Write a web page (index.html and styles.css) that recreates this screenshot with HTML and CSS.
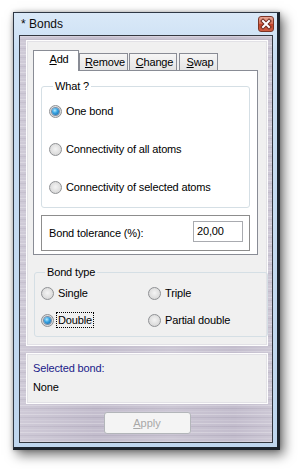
FILE: index.html
```html
<html>
    <head>
        <title> Bonds </title>
        <link rel="stylesheet" href="styles.css">
    </head>
    <body>
        <div class="window">
            <div class="titlebar">
                <span class="title">* Bonds</span>
                <span class="close">
                    <svg width="14" height="14" viewBox="0 0 14 14">
                        <path d="M4 4 L10 10 M10 4 L4 10" stroke="#6e2a1c" stroke-width="4" stroke-linecap="square"/>
                        <path d="M4 4 L10 10 M10 4 L4 10" stroke="#fff" stroke-width="2" stroke-linecap="square"/>
                    </svg>
                </span>
            </div>
            <div class="client">
                <div class="panel main">
                    <div class="tabs">
                        <div class="tab active"><u>A</u>dd</div>
                        <div class="tab remove"><u>R</u>emove</div>
                        <div class="tab change"><u>C</u>hange</div>
                        <div class="tab swap"><u>S</u>wap</div>
                    </div>
                    <div class="tabpage">
                        <fieldset class="group what">
                            <legend>What ?</legend>
                            <div class="rows">
                                <label class="radio checked"><span class="dot"></span>One bond</label>
                                <label class="radio"><span class="dot"></span>Connectivity of all atoms</label>
                                <label class="radio"><span class="dot"></span>Connectivity of selected atoms</label>
                            </div>
                        </fieldset>
                        <div class="tolerance">
                            <span>Bond tolerance (%):</span>
                            <span class="edit">20,00</span>
                        </div>
                    </div>
                    <fieldset class="group bondtype">
                        <legend>Bond type</legend>
                        <div class="grid">
                            <label class="radio"><span class="dot"></span>Single</label>
                            <label class="radio"><span class="dot"></span>Triple</label>
                            <label class="radio checked"><span class="dot"></span><span class="focus">Double</span></label>
                            <label class="radio"><span class="dot"></span>Partial double</label>
                        </div>
                    </fieldset>
                </div>
                <div class="panel info">
                    <div class="caption">Selected bond:</div>
                    <div class="value">None</div>
                </div>
                <button class="apply" disabled><u>A</u>pply</button>
            </div>
        </div>
    </body>
</html>
```

FILE: styles.css
```css
body {
    margin: 0;
    padding: 12px 0 0 13px;
    background: #ffffff;
    font-family: "Liberation Sans", Arial, sans-serif;
    font-size: 11px;
    letter-spacing: -0.15px;
    color: #000;
}
/* Window frame (Aero basic look) */
.window {
    width: 267px;
    height: 438px;
    box-sizing: border-box;
    border: 1px solid #2f3845;
    border-right-width: 3px;
    border-bottom-width: 3px;
    border-right-color: #1c232c;
    border-bottom-color: #1c232c;
    padding: 0 4px 4px 5px;
    background: linear-gradient(#dae9f8, #c9def3 40px, #bfd6ee);
    box-shadow: 4px 5px 11px rgba(0, 0, 0, 0.55), 0 0 4px rgba(0, 0, 0, 0.25);
    display: flex;
    flex-direction: column;
}
.titlebar {
    height: 22px;
    margin: 0 -4px 0 -5px;
    padding: 0 3px 0 7px;
    display: flex;
    align-items: center;
    justify-content: space-between;
}
.title {
    font-size: 12px;
    letter-spacing: 0;
    color: #0d0d0d;
}
.close {
    width: 16px;
    height: 16px;
    box-sizing: border-box;
    border: 1px solid #7b3426;
    border-radius: 3px;
    background: linear-gradient(#e8a898, #d46b52 50%, #c2432a 51%, #cf5f43);
    display: flex;
    align-items: center;
    justify-content: center;
}
/* Brushed metal client area */
.client {
    flex: 1;
    border: 1px solid #343840;
    padding: 4px 4px 8px 6px;
    background-color: #c3bdcd;
    background-image:
        linear-gradient(90deg, rgba(255,255,255,0.2), rgba(255,255,255,0) 30%, rgba(255,255,255,0.14) 60%, rgba(255,255,255,0) 85%, rgba(255,255,255,0.16)),
        repeating-linear-gradient(180deg, rgba(255,255,255,0.25) 0 1px, rgba(255,255,255,0) 1px 3px, rgba(80,70,100,0.1) 3px 4px, rgba(255,255,255,0) 4px 6px, rgba(255,255,255,0.12) 6px 7px, rgba(255,255,255,0) 7px 9px);
    display: flex;
    flex-direction: column;
}
.panel {
    background: #f0f0f0;
    border: 1px solid #fdfdfd;
    box-shadow: inset 0 0 0 1px #e2e1e6;
}
.main {
    height: 306px;
    box-sizing: border-box;
    padding: 9px 9px 0 6px;
}
/* Tabs */
.tabs {
    display: flex;
    align-items: flex-end;
    height: 20px;
}
.tab {
    box-sizing: border-box;
    height: 17px;
    border: 1px solid #898c95;
    border-bottom: none;
    background: linear-gradient(#f6f6f6, #e4e4e4);
    line-height: 16px;
    text-align: center;
    padding-left: 3px;
}
.tab.active {
    height: 21px;
    margin-bottom: -1px;
    background: #fff;
    position: relative;
    line-height: 17px;
    padding-left: 6px;
    width: 46px;
}
.tab.remove { width: 49px; margin-left: 0; }
.tab.change { width: 48px; margin-left: 1px; }
.tab.swap { width: 39px; margin-left: 2px; }
.tabpage {
    width: 225px;
    box-sizing: border-box;
    background: #fff;
    border: 1px solid #898c95;
    padding: 0 7px 3px 7px;
}
/* Group boxes */
.group {
    margin: 0;
    border: 1px solid #d5dfe5;
    border-radius: 3px;
    padding: 0;
}
.group legend {
    margin-left: 4px;
    padding: 0 2px;
    line-height: 13px;
}
.what {
    margin-top: 9px;
    padding: 10px 7px 12px 7px;
}
.what .rows {
    display: flex;
    flex-direction: column;
    gap: 22px;
}
.radio {
    display: flex;
    align-items: center;
    height: 16px;
    white-space: nowrap;
}
.dot {
    width: 13px;
    height: 13px;
    box-sizing: border-box;
    border-radius: 50%;
    border: 1px solid #8f9194;
    background: radial-gradient(circle at 50% 45%, #f4f4f4 0, #e0e0e0 55%, #cfcfcf 100%);
    margin-right: 4px;
    flex: none;
    display: flex;
    align-items: center;
    justify-content: center;
}
.radio.checked .dot::after {
    content: "";
    width: 7px;
    height: 7px;
    border-radius: 50%;
    background: radial-gradient(circle at 40% 35%, #b8ecff 0, #3aa6e4 40%, #0b5a9c 100%);
    box-shadow: 0 0 0 1px rgba(20, 60, 110, 0.5);
}
.tolerance {
    margin-top: 7px;
    height: 36px;
    box-sizing: border-box;
    border: 1px solid #8d8d8d;
    padding: 0 6px 0 7px;
    display: flex;
    align-items: center;
    justify-content: space-between;
}
.edit {
    width: 50px;
    height: 21px;
    box-sizing: border-box;
    border: 1px solid #a9abb0;
    padding-left: 3px;
    line-height: 18px;
    margin-top: -3px;
}
.bondtype {
    margin: 11px 0 0 1px;
    width: 226px;
    padding: 6px 0 8px 6px;
}
.bondtype .grid {
    display: grid;
    grid-template-columns: 107px 1fr;
    row-gap: 11px;
}
.focus {
    border: 1px dotted #000;
    padding: 1px 1px 0 1px;
    margin-left: -2px;
    line-height: 13px;
}
/* Selected bond info */
.info {
    margin-top: 7px;
    padding: 7px 6px 9px 6px;
    line-height: 14px;
}
.info .value {
    margin-top: 5px;
}
.caption {
    color: #1a1a8a;
}
.apply {
    margin: 8px auto 0 auto;
    width: 87px;
    height: 22px;
    border: 1px solid #b3b6ba;
    border-radius: 3px;
    background: #f4f4f4;
    color: #a8a8a8;
    font-family: "Liberation Sans", Arial, sans-serif;
    font-size: 11px;
    padding: 0;
}
```
